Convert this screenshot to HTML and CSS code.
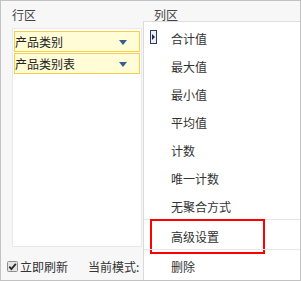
FILE: index.html
```html
<!DOCTYPE html>
<html lang="zh">
<head>
  <meta charset="UTF-8" />
  <title>透视设置</title>
  <link rel="stylesheet" href="styles.css">
</head>
<body>
  <div class="pivot">
    <div class="zones">
      <div class="zone">
        <div class="zone-title">行区</div>
        <div class="zone-body">
          <div class="field"><span>产品类别</span><i class="caret"></i></div>
          <div class="field"><span>产品类别表</span><i class="caret"></i></div>
        </div>
      </div>
      <div class="zone">
        <div class="zone-title">列区</div>
        <div class="zone-body"></div>
      </div>
    </div>

    <div class="footer">
      <label class="refresh">
        <span class="check">
          <svg width="11" height="11" viewBox="0 0 11 11">
            <rect x="0.5" y="0.5" width="10" height="10" rx="1" fill="#e4e4e4" stroke="#8e8e8e" />
            <path d="M2.3 5.6 L4.4 8 L8.8 2.8" fill="none" stroke="#2a2a2a" stroke-width="1.8" />
          </svg>
        </span>立即刷新
      </label>
      <span class="mode">当前模式:</span>
    </div>

    <!-- context menu on the column field -->
    <ul class="menu">
      <li class="item">
        <span class="slot">
          <svg width="8" height="15" viewBox="0 0 8 15">
            <rect x="0.5" y="0.5" width="6" height="13" fill="#eef0f6" stroke="#2c3a6a" />
            <path d="M2 4 L5 7 L2 10 Z" fill="#1c2850" />
          </svg>
        </span>合计值
      </li>
      <li class="item"><span class="slot"></span>最大值</li>
      <li class="item"><span class="slot"></span>最小值</li>
      <li class="item"><span class="slot"></span>平均值</li>
      <li class="item"><span class="slot"></span>计数</li>
      <li class="item"><span class="slot"></span>唯一计数</li>
      <li class="item"><span class="slot"></span>无聚合方式</li>
      <li class="item sep marked"><span class="slot"></span>高级设置</li>
      <li class="item sep"><span class="slot"></span>删除</li>
    </ul>
  </div>
</body>
</html>
```

FILE: styles.css
```css
* {
  box-sizing: border-box;
}
body {
  margin: 0;
  font-family: "Noto Sans CJK SC", "Liberation Sans", sans-serif;
  font-size: 12px;
  color: #333;
}
.pivot {
  position: relative;
  width: 301px;
  height: 281px;
  border: 1px solid #c2c2c2;
  background: #f7f7f7;
  padding: 4px 0 0 11px;
  overflow: hidden;
}
.zones {
  display: grid;
  grid-template-columns: 130px 130px;
  gap: 12px;
}
.zone-title {
  height: 20px;
  line-height: 20px;
  color: #444;
  margin-bottom: 3px;
}
.zone-body {
  height: 219px;
  background: #fff;
  border: 1px solid #e9e9e9;
  padding: 2px 1px;
}
.field {
  display: flex;
  align-items: center;
  justify-content: space-between;
  height: 21px;
  margin-bottom: 1px;
  padding: 0 12px 0 0;
  background: #fffcd6;
  border: 1px solid #f6cf4a;
  line-height: 19px;
  color: #222;
}
.caret {
  width: 0;
  height: 0;
  border-left: 4.5px solid transparent;
  border-right: 4.5px solid transparent;
  border-top: 5px solid #33608f;
  margin-top: 1px;
}
.footer {
  display: flex;
  align-items: center;
  height: 32px;
  margin-left: -5px;
  padding-top: 6px;
}
.refresh {
  display: flex;
  align-items: center;
  gap: 2px;
}
.check {
  display: flex;
  width: 11px;
  height: 11px;
}
.mode {
  margin-left: 20px;
}
.menu {
  position: absolute;
  left: 142px;
  top: 20px;
  right: 0;
  bottom: 0;
  margin: 0;
  padding: 1px 0 0;
  list-style: none;
  background: #fff;
  border-top: 1px solid #dedede;
  border-left: 1px solid #dadada;
}
.item {
  position: relative;
  display: flex;
  height: 28px;
  padding: 3px 0 0 6px;
  line-height: 25px;
  color: #333;
}
.item.sep {
  height: 30px;
  padding-top: 4px;
  border-top: 1px solid #e6e6e6;
}
.slot {
  width: 21px;
  padding-top: 4px;
}
.slot svg {
  display: block;
}
.marked::after {
  content: "";
  position: absolute;
  left: 6px;
  top: -1px;
  width: 111px;
  height: 31px;
  border: 2px solid #ff0000;
}
```
